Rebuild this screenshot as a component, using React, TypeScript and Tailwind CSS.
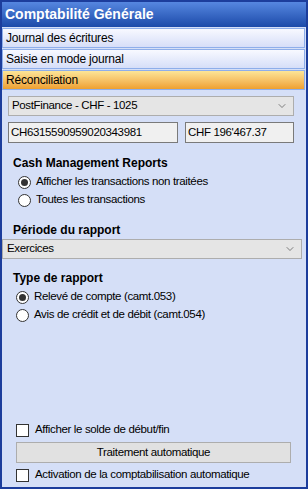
import { ChevronDown } from 'lucide-react';

function Radio({ checked, label }: { checked?: boolean; label: string }) {
  return (
    <div className="flex items-center h-[18px]">
      <span className="w-[13px] h-[13px] rounded-full border border-[#333] bg-white flex items-center justify-center">
        {checked && <span className="w-[7px] h-[7px] rounded-full bg-[#333]" />}
      </span>
      <span className="ml-[5px]">{label}</span>
    </div>
  );
}

function Check({ label }: { label: string }) {
  return (
    <div className="flex items-center h-[18px]">
      <span className="w-[13px] h-[13px] border border-[#333] bg-white" />
      <span className="ml-[6px]">{label}</span>
    </div>
  );
}

function Tab({ label, active }: { label: string; active?: boolean }) {
  return (
    <div
      className={
        active
          ? 'h-[20px] border border-[#8eaeea] bg-gradient-to-b from-[#fce596] to-[#eea02e] px-[3px] flex items-center'
          : 'h-[20px] border border-[#8eaeea] bg-gradient-to-b from-[#f8f9ff] to-[#d6def8] px-[3px] flex items-center'
      }
    >
      {label}
    </div>
  );
}

export default function App() {
  return (
    <div
      className="w-[308px] h-[489px] border-2 border-[#1c3d9c] bg-[#d5dff7] text-[11.5px] tracking-[-0.35px] text-black flex flex-col overflow-hidden"
      style={{ fontFamily: '"Liberation Sans", Arial, sans-serif' }}
    >
      <div className="h-[25px] shrink-0 bg-gradient-to-b from-[#5687e0] to-[#1c4aa9] text-white font-bold text-[14px] tracking-normal flex items-center px-[3px]">
        Comptabilité Générale
      </div>
      <div className="flex flex-col gap-[1px] mt-[1px] pr-[1px] text-[12px] tracking-[-0.2px]">
        <Tab label="Journal des écritures" />
        <Tab label="Saisie en mode journal" />
        <Tab label="Réconciliation" active />
      </div>

      <div className="px-[6px] mt-[6px]">
        <div className="h-[20px] border border-[#adadad] bg-[#e5e5e5] flex items-center justify-between pl-[3px] pr-[5px] mr-[6px]">
          <span>PostFinance - CHF - 1025</span>
          <ChevronDown className="w-[12px] h-[12px] text-[#444]" strokeWidth={1.3} />
        </div>
        <div className="flex gap-[7px] mt-[6px] mr-[6px]">
          <div className="w-[170px] h-[21px] border border-[#7a7a7a] bg-[#f0f0f0] flex items-center px-[2px]">
            CH6315590959020343981
          </div>
          <div className="flex-1 h-[21px] border border-[#7a7a7a] bg-[#f0f0f0] flex items-center px-[2px]">
            CHF 196'467.37
          </div>
        </div>

        <div className="font-bold text-[12px] tracking-normal mt-[11px] pl-[5px]">Cash Management Reports</div>
        <div className="pl-[10px] mt-[1px]">
          <Radio checked label="Afficher les transactions non traitées" />
          <Radio label="Toutes les transactions" />
        </div>
      </div>

      <div className="font-bold text-[12px] tracking-normal mt-[12px] pl-[11px]">Période du rapport</div>
      <div className="h-[20px] border border-[#adadad] bg-[#e5e5e5] flex items-center justify-between pl-[4px] pr-[5px] mr-[4px]">
        <span>Exercices</span>
        <ChevronDown className="w-[12px] h-[12px] text-[#444]" strokeWidth={1.3} />
      </div>

      <div className="font-bold text-[12px] tracking-normal mt-[10px] pl-[11px]">Type de rapport</div>
      <div className="pl-[14px] mt-[1px]">
        <Radio checked label="Relevé de compte (camt.053)" />
        <Radio label="Avis de crédit et de débit (camt.054)" />
      </div>

      <div className="flex-1" />

      <div className="px-[14px] pb-[3px]">
        <Check label="Afficher le solde de début/fin" />
        <div className="h-[21px] mt-[3px] border border-[#adadad] bg-[#e1e1e1] flex items-center justify-center mr-[1px]">
          Traitement automatique
        </div>
        <div className="mt-[3px]">
          <Check label="Activation de la comptabilisation automatique" />
        </div>
      </div>
    </div>
  );
}
